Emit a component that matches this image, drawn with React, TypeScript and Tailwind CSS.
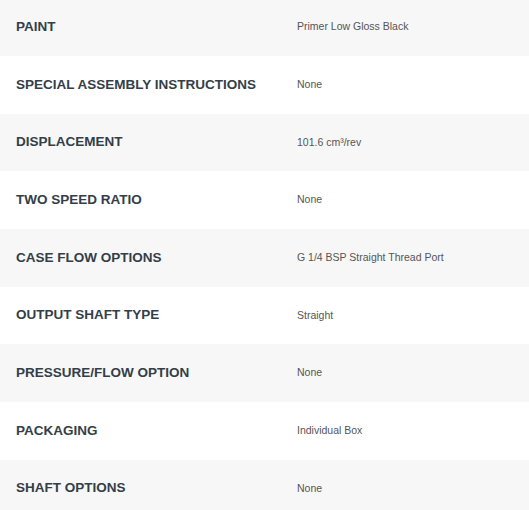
import React from "react";

const rows: [string, string][] = [
  ["PAINT", "Primer Low Gloss Black"],
  ["SPECIAL ASSEMBLY INSTRUCTIONS", "None"],
  ["DISPLACEMENT", "101.6 cm³/rev"],
  ["TWO SPEED RATIO", "None"],
  ["CASE FLOW OPTIONS", "G 1/4 BSP Straight Thread Port"],
  ["OUTPUT SHAFT TYPE", "Straight"],
  ["PRESSURE/FLOW OPTION", "None"],
  ["PACKAGING", "Individual Box"],
  ["SHAFT OPTIONS", "None"],
];

export default function App() {
  return (
    <div className="w-[529px] h-[510px] overflow-hidden bg-white" style={{ fontFamily: '"Liberation Sans", Arial, sans-serif' }}>
      <div className="-mt-[1.67px]">
        {rows.map(([k, v], i) => (
          <div
            key={k}
            className={`flex items-center h-[57.67px] ${i % 2 === 0 ? "bg-[#f7f7f7]" : "bg-white"}`}
          >
            <div className="w-[297px] pl-[16px] text-[13.5px] font-bold text-[#333e48]">{k}</div>
            <div className="text-[10.5px] text-[#555555]">{v}</div>
          </div>
        ))}
      </div>
    </div>
  );
}
